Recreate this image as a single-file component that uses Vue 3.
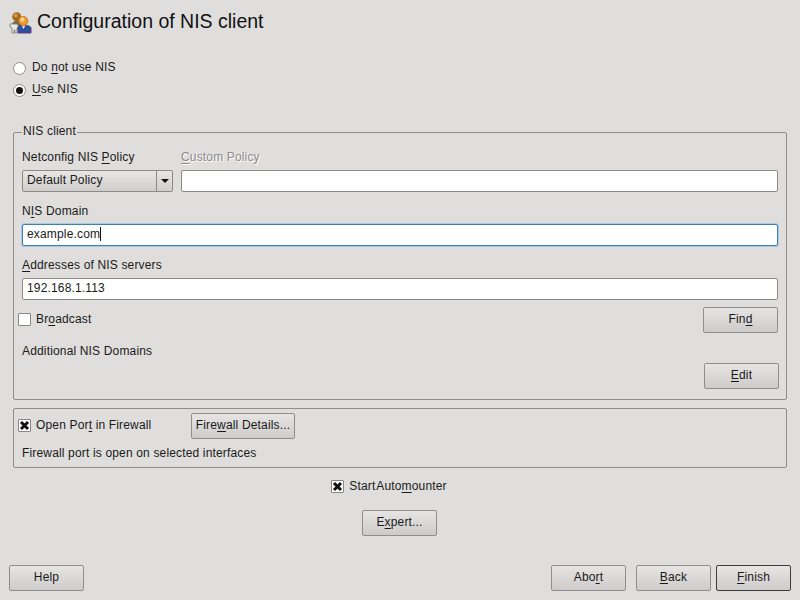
<script setup>
const policy = 'Default Policy'
const domain = 'example.com'
const servers = '192.168.1.113'
</script>

<template>
  <div class="dialog">
    <header class="title-row">
      <svg class="logo" width="24" height="24" viewBox="0 0 24 24">
        <circle cx="7.700" cy="6.800" r="4.500" fill="#a8691c" />
        <circle cx="6.700" cy="5.500" r="2" fill="#c99a52" />
        <path d="M3 15c0-3 2-4 5-4s5 2 5 4v4H3z" fill="#6d6a3f" />
        <path d="M1 14h7l1 1v2l-1 1v5H6v-3H5v3H3v-5l-2-1z" fill="#eceae8" stroke="#8a8a88" stroke-width="1" />
        <path d="M9 23v-5c0-2 2-3 5-3s8 1 8 3v5z" fill="#2d4f9c" stroke="#5b3c86" />
        <path d="M12.500 15.500h4l-2 3.500z" fill="#dfe6f4" />
        <circle cx="14.300" cy="11" r="4.500" fill="#ee9b2c" stroke="#c87a1e" />
        <circle cx="13.300" cy="9.500" r="2.200" fill="#f8cd8a" />
      </svg>
      <h1 class="title">Configuration of NIS client</h1>
    </header>

    <section class="radios">
      <label class="radio-row">
        <span class="radio"></span>
        <span>Do <u>n</u>ot use NIS</span>
      </label>
      <label class="radio-row">
        <span class="radio on"></span>
        <span><u>U</u>se NIS</span>
      </label>
    </section>

    <fieldset class="frame nis">
      <legend>NIS client</legend>
      <div class="policy-row">
        <div class="policy-col">
          <div class="field-label">Netconfig NIS <u>P</u>olicy</div>
          <div class="combo">
            <span class="combo-text">{{ policy }}</span>
            <span class="combo-arrow"></span>
          </div>
        </div>
        <div class="custom-col">
          <div class="field-label disabled"><u>C</u>ustom Policy</div>
          <div class="input"></div>
        </div>
      </div>

      <div class="field-label gap"><span>N<u>I</u>S Domain</span></div>
      <div class="input focused">{{ domain }}<span class="caret"></span></div>

      <div class="field-label gap"><u>A</u>ddresses of NIS servers</div>
      <div class="input">{{ servers }}</div>

      <div class="broadcast-row">
        <label class="check-row">
          <span class="check"></span>
          <span>Br<u>o</u>adcast</span>
        </label>
        <button class="btn">Fin<u>d</u></button>
      </div>

      <div class="additional">Additional NIS Domains</div>
      <div class="edit-row">
        <button class="btn">
          <u>E</u>dit
        </button>
      </div>
    </fieldset>

    <section class="frame firewall">
      <div class="firewall-row">
        <label class="check-row firewall-check">
          <span class="check checked">
            <svg width="11" height="11" viewBox="0 0 11 11"><path d="M2 2l7 7M9 2l-7 7" stroke="#111" stroke-width="3" /></svg>
          </span>
          <span>Open Por<u>t</u> in Firewall</span>
        </label>
        <button class="btn details">Fire<u>w</u>all Details...</button>
      </div>
      <div class="firewall-note">Firewall port is open on selected interfaces</div>
    </section>

    <div class="automount">
      <label class="check-row">
        <span class="check checked">
          <svg width="11" height="11" viewBox="0 0 11 11"><path d="M2 2l7 7M9 2l-7 7" stroke="#111" stroke-width="3" /></svg>
        </span>
        <span class="tight">Start Auto<u>m</u>ounter</span>
      </label>
    </div>

    <div class="expert">
      <button class="btn">E<u>x</u>pert...</button>
    </div>

    <footer class="footer">
      <button class="btn">Help</button>
      <div class="footer-right">
        <button class="btn">Abo<u>r</u>t</button>
        <button class="btn back"><u>B</u>ack</button>
        <button class="btn primary"><u>F</u>inish</button>
      </div>
    </footer>
  </div>
</template>

<style scoped>
.dialog {
  width: 800px;
  height: 600px;
  box-sizing: border-box;
  overflow: hidden;
  display: flex;
  flex-direction: column;
  background: #dfdedc;
  color: #1a1a1a;
  font-family: "Liberation Sans", Arial, sans-serif;
  font-size: 12px;
  letter-spacing: 0.16px;
  line-height: 14px;
}

u {
  text-underline-offset: 2px;
}

.title-row {
  display: flex;
  align-items: center;
  height: 24px;
  margin: 9px 0 0 9px;
  gap: 4px;
}

.logo {
  margin-top: 1px;
}

.title {
  margin: 0;
  font-size: 19.500px;
  font-weight: normal;
  letter-spacing: 0;
  line-height: 24px;
  color: #111;
}

.radios {
  margin: 26px 0 0 13px;
  display: flex;
  flex-direction: column;
  gap: 6px;
}

.radio-row {
  display: flex;
  align-items: center;
  gap: 6px;
}

.radio {
  width: 13px;
  height: 13px;
  box-sizing: border-box;
  border: 1px solid #8e8e8e;
  border-radius: 50%;
  background: #fff;
  margin-top: 3px;
  display: flex;
  align-items: center;
  justify-content: center;
}

.radio.on::after {
  content: "";
  width: 7px;
  height: 7px;
  border-radius: 50%;
  background: #111;
}

.frame {
  margin: 0 13px;
  border: 1px solid #8e8e8c;
  border-radius: 2px;
  box-sizing: border-box;
}

.nis {
  margin-top: 27px;
  padding: 0 8px;
  height: 276px;
  min-width: 0;
}

.nis legend {
  padding: 0 1px 2px;
  line-height: 14px;
}

.policy-row {
  display: flex;
  gap: 8px;
  margin-top: 10px;
}

.policy-col {
  width: 151px;
}

.custom-col {
  flex: 1;
}

.field-label {
  height: 14px;
  margin-bottom: 6px;
}

.field-label.gap {
  margin-top: 12px;
}

.disabled {
  color: #8b8b8b;
  text-shadow: 1px 1px 0 #fff;
}

.combo {
  display: flex;
  height: 22px;
  box-sizing: border-box;
  border: 1px solid #8a8a88;
  border-radius: 2px;
  background: linear-gradient(#e8e7e5, #cfcecc);
  align-items: center;
}

.combo-text {
  flex: 1;
  padding: 0 0 2px 4px;
}

.combo-arrow {
  width: 15px;
  height: 100%;
  border-left: 1px solid #8a8a88;
  display: flex;
  align-items: center;
  justify-content: center;
}

.combo-arrow::after {
  content: "";
  border-left: 4px solid transparent;
  border-right: 4px solid transparent;
  border-top: 4px solid #111;
}

.input {
  height: 22px;
  box-sizing: border-box;
  border: 1px solid #8a8a88;
  border-radius: 2px;
  background: #fff;
  padding: 0 4px 2px;
  display: flex;
  align-items: center;
}

.input.focused {
  border-color: #3c7fb1;
  box-shadow: 0 0 0 1px #a9cbe3;
}

.caret {
  width: 1px;
  height: 14px;
  background: #111;
}

.broadcast-row {
  display: flex;
  justify-content: space-between;
  align-items: center;
  margin-top: 7px;
  margin-left: -4px;
}

.check-row {
  display: flex;
  align-items: center;
  gap: 5px;
}

.check-row > span:last-child {
  margin-top: -2px;
}

.check {
  width: 13px;
  height: 13px;
  box-sizing: border-box;
  border: 1px solid #868686;
  border-radius: 1px;
  background: #fff;
  display: flex;
  align-items: center;
  justify-content: center;
}

.broadcast-row .check,
.firewall-row .check {
  margin-top: -2px;
}

.additional {
  margin-top: 11px;
}

.edit-row {
  display: flex;
  justify-content: flex-end;
  margin-top: 5px;
  margin-right: -1px;
}

.btn {
  width: 75px;
  height: 26px;
  padding: 0 0 2px;
  box-sizing: border-box;
  border: 1px solid #8e8e8c;
  border-radius: 2px;
  background: linear-gradient(#e6e5e3, #cdccca);
  color: #1a1a1a;
  font: inherit;
  letter-spacing: inherit;
}

.firewall {
  margin-top: 8px;
  height: 60px;
  padding: 4px 4px 0;
}

.firewall-row {
  display: flex;
  align-items: center;
}

.firewall-check {
  width: 173px;
}

.btn.details {
  width: 104px;
}

.firewall-note {
  margin: 7px 0 0 4px;
}

.automount {
  display: flex;
  justify-content: center;
  margin-top: 12px;
  margin-left: -22px;
}

.tight {
  word-spacing: -2px;
}

.expert {
  display: flex;
  justify-content: center;
  margin-top: 17px;
  margin-right: 1px;
}

.footer {
  margin: 29px 9px 0;
  display: flex;
  justify-content: space-between;
}

.footer-right {
  display: flex;
  gap: 10px;
}

.btn.back {
  margin-right: -5px;
}

.btn.primary {
  border-color: #3d3d3d;
}
</style>
